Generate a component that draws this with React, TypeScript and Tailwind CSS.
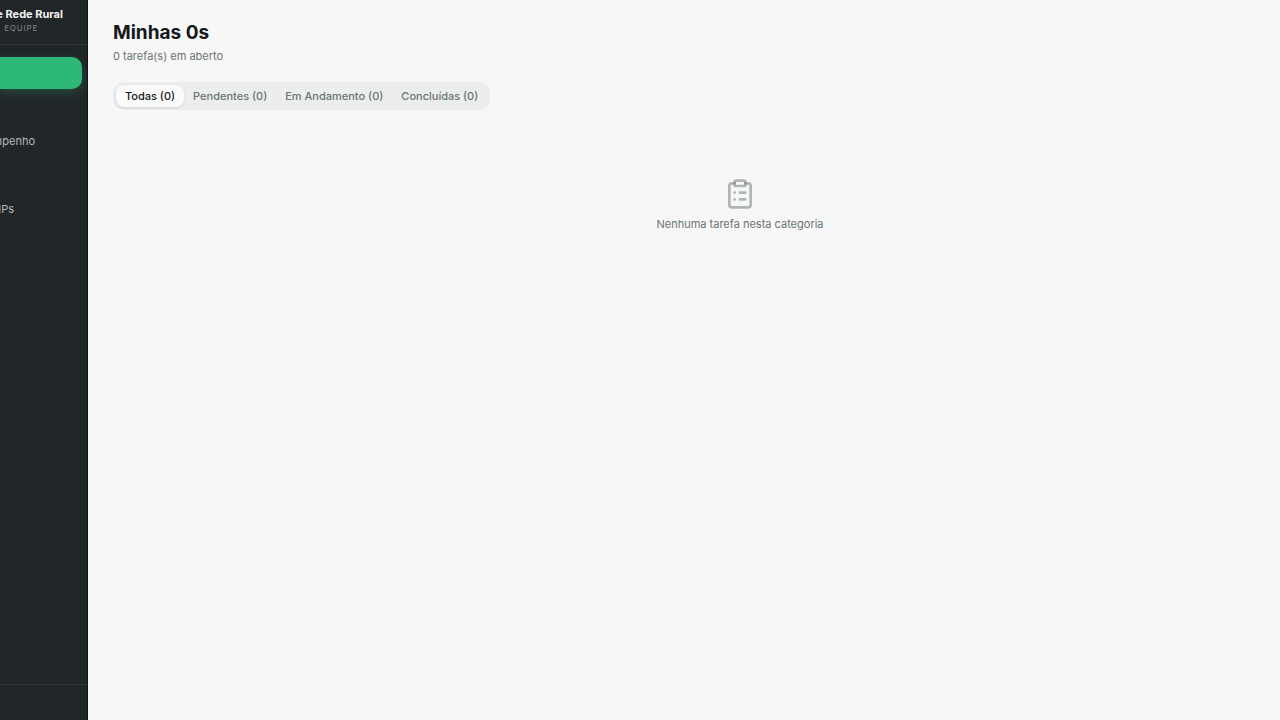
import { useState } from 'react';
import { ClipboardList } from 'lucide-react';
import clsx from 'clsx';

type NavItem = {
  id: string;
  label: string;
};

const navItems: NavItem[] = [
  { id: 'tarefas', label: '' },
  { id: 'painel', label: '' },
  { id: 'desempenho', label: 'mpenho' },
  { id: 'agenda', label: '' },
  { id: 'ips', label: 'IPs' },
];

const tabs = ['Todas', 'Pendentes', 'Em Andamento', 'Concluídas'];

function Sidebar() {
  return (
    <aside className="flex w-[88px] shrink-0 flex-col overflow-hidden border-r border-[#111517] bg-[#212629]">
      <header className="flex h-[45px] flex-col items-end border-b border-[#2e3437] pt-[7px]">
        <p className="mr-6 text-[11px] leading-[14px] font-bold whitespace-nowrap text-[#f0f3f1]">
          de Rede Rural
        </p>
        <p className="mr-[49px] text-[8px] leading-[14px] tracking-widest text-[#7f8588]">EQUIPE</p>
      </header>

      <nav className="flex flex-1 flex-col gap-[2px] pt-3 pr-[5px]">
        {navItems.map((item, index) => (
          <a
            key={item.id}
            href={`#${item.id}`}
            aria-label={item.label || item.id}
            className={clsx(
              'flex h-8 items-center justify-end rounded-r-[10px] text-[11px] whitespace-nowrap text-[#b4b9bb]',
              index === 0 && 'bg-[#2eb877] shadow-[0_4px_12px_rgba(46,184,119,0.25)]',
              item.id === 'desempenho' && 'pr-[47px]',
              item.id === 'ips' && 'pr-[68px]',
            )}
          >
            {item.label}
          </a>
        ))}
      </nav>

      <footer className="h-9 border-t border-[#2e3437]" />
    </aside>
  );
}

export default function App() {
  const [active, setActive] = useState('Todas');

  return (
    <div className="flex min-h-screen bg-[#f7f7f7] font-['Inter',sans-serif]">
      <Sidebar />

      <main className="flex-1 px-[25px] pt-5">
        <h1 className="text-[19px] leading-[26px] font-bold text-[#15191b]">Minhas 0s</h1>
        <p className="mt-[2px] text-[11px] leading-4 text-[#6a7476]">0 tarefa(s) em aberto</p>

        <div role="tablist" className="mt-[18px] inline-flex h-7 items-center rounded-[10px] bg-[#eceeed] px-[3px]">
          {tabs.map((tab) => (
            <button
              key={tab}
              type="button"
              role="tab"
              aria-selected={active === tab}
              onClick={() => setActive(tab)}
              className={clsx(
                'h-[22px] rounded-lg px-[9px] text-[11px] font-medium whitespace-nowrap',
                active === tab ? 'bg-[#fafafa] text-[#15191b] shadow-sm' : 'text-[#6a7476]',
              )}
            >
              {tab} (0)
            </button>
          ))}
        </div>

        <section className="flex flex-col items-center pt-[68px] pl-28">
          <ClipboardList className="size-8 text-[#6a7476]/50" strokeWidth={2} />
          <p className="mt-[6px] text-[11px] leading-4 text-[#6a7476]">Nenhuma tarefa nesta categoria</p>
        </section>
      </main>
    </div>
  );
}
